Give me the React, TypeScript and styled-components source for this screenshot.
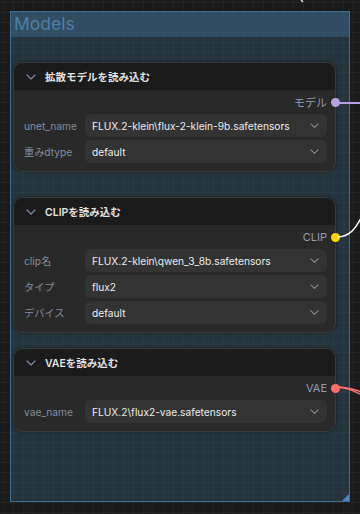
import React from "react";
import styled, { createGlobalStyle } from "styled-components";

const Global = createGlobalStyle`
  html, body { margin: 0; padding: 0; background: #1c1c1c; }
  body { width: 360px; height: 514px; overflow: hidden; font-family: Inter, "Noto Sans CJK JP", sans-serif; }
  * { box-sizing: border-box; }
`;

const Canvas = styled.div`
  position: relative;
  width: 360px;
  height: 514px;
  padding: 11px 10px 12px 10px;
  background-color: #1b1b1b;
  background-image:
    linear-gradient(to right, rgba(255,255,255,0.035) 1px, transparent 1px),
    linear-gradient(to bottom, rgba(255,255,255,0.035) 1px, transparent 1px);
  background-size: 10px 10px;
  background-position: 3px 2px;
`;

const Group = styled.div`
  position: relative;
  height: 491px;
  border: 1px solid #3f6d92;
  background: rgba(52, 84, 104, 0.45);
  display: flex;
  flex-direction: column;
`;

const GroupTitle = styled.div`
  height: 25px;
  background: rgba(58, 98, 130, 0.55);
  color: #4d80a8;
  font-family: Inter, sans-serif;
  font-size: 17.5px;
  line-height: 24px;
  padding-left: 3px;
`;

const GroupBody = styled.div`
  display: flex;
  flex-direction: column;
  padding: 0 13px 0 2px;
`;

const Resize = styled.div`
  position: absolute;
  right: 0;
  bottom: 0;
  width: 0;
  height: 0;
  border-left: 7px solid transparent;
  border-bottom: 7px solid #4a88c4;
`;

const Node = styled.div<{ $mt: number }>`
  position: relative;
  margin-top: ${(p) => p.$mt}px;
  border: 1px solid #3a3a3a;
  border-radius: 10px;
  background: #292929;
  box-shadow: 0 0 3px rgba(0,0,0,0.5);
`;

const Header = styled.div`
  height: 27px;
  display: flex;
  align-items: center;
  background: #1b1b1b;
  border-radius: 9px 9px 0 0;
  padding-left: 12px;
  gap: 9px;
  color: #e2e2e2;
  font-size: 10.5px;
  font-weight: 600;
`;

const Body = styled.div`
  display: flex;
  flex-direction: column;
  padding: 4px 8px 8px 10px;
  gap: 3px;
`;

const OutRow = styled.div`
  height: 16px;
  margin-bottom: 1px;
  display: flex;
  justify-content: flex-end;
  align-items: center;
  color: #929bb3;
  font-size: 11px;
`;

const Dot = styled.span<{ $c: string }>`
  position: absolute;
  right: -5px;
  width: 9px;
  height: 9px;
  border-radius: 50%;
  background: ${(p) => p.$c};
`;

const Row = styled.div`
  display: flex;
  align-items: center;
  height: 23px;
`;

const Label = styled.div`
  width: 61px;
  color: #858c9c;
  font-size: 10.2px;
  white-space: nowrap;
`;

const Combo = styled.div`
  flex: 1;
  height: 23px;
  border-radius: 6px;
  background: #333333;
  display: flex;
  align-items: center;
  justify-content: space-between;
  padding: 0 8px 0 7px;
  color: #ececec;
  font-size: 10.2px;
  white-space: nowrap;
`;

const Links = styled.svg`
  position: absolute;
  left: 0;
  top: 0;
  pointer-events: none;
`;

const Chev = ({ size = 10, color = "#8a8fa6" }: { size?: number; color?: string }) => (
  <svg width={size} height={size * 0.6} viewBox="0 0 10 6" fill="none">
    <path d="M1 1 L5 5 L9 1" stroke={color} strokeWidth="1.2" strokeLinecap="round" strokeLinejoin="round" />
  </svg>
);

type W = { label: string; value: string };

const LoaderNode = ({
  mt,
  title,
  out,
  color,
  widgets,
}: {
  mt: number;
  title: string;
  out: string;
  color: string;
  widgets: W[];
}) => (
  <Node $mt={mt}>
    <Header>
      <Chev size={10} color="#7f84a0" />
      <span>{title}</span>
    </Header>
    <Body>
      <OutRow>
        {out}
        <Dot $c={color} />
      </OutRow>
      {widgets.map((w) => (
        <Row key={w.label}>
          <Label>{w.label}</Label>
          <Combo>
            <span>{w.value}</span>
            <Chev size={9} color="#8d8d8d" />
          </Combo>
        </Row>
      ))}
    </Body>
  </Node>
);

export default function App() {
  return (
    <>
      <Global />
      <Canvas>
        <Group>
          <GroupTitle>Models</GroupTitle>
          <GroupBody>
            <LoaderNode
              mt={25}
              title="拡散モデルを読み込む"
              out="モデル"
              color="#b6a1e0"
              widgets={[
                { label: "unet_name", value: "FLUX.2-klein\\flux-2-klein-9b.safetensors" },
                { label: "重みdtype", value: "default" },
              ]}
            />
            <LoaderNode
              mt={25}
              title="CLIPを読み込む"
              out="CLIP"
              color="#ffd400"
              widgets={[
                { label: "clip名", value: "FLUX.2-klein\\qwen_3_8b.safetensors" },
                { label: "タイプ", value: "flux2" },
                { label: "デバイス", value: "default" },
              ]}
            />
            <LoaderNode
              mt={15}
              title="VAEを読み込む"
              out="VAE"
              color="#ff6e6e"
              widgets={[{ label: "vae_name", value: "FLUX.2\\flux2-vae.safetensors" }]}
            />
          </GroupBody>
          <Resize />
        </Group>
        <Links width="360" height="514" viewBox="0 0 360 514">
          <path d="M337 103 L360 103" stroke="#b6a1e0" strokeWidth="2" fill="none" />
          <path d="M337 237 C350 237 356 228 362 216" stroke="#ffffff" strokeWidth="1.6" fill="none" />
          <path d="M337 387 C348 387 352 389 362 392" stroke="#ff6e6e" strokeWidth="1.6" fill="none" />
          <path d="M337 387 C348 388 352 390 362 395" stroke="#ff6e6e" strokeWidth="1.4" fill="none" />
          <path d="M301 0 L303 2" stroke="#e0e0e0" strokeWidth="1.5" fill="none" />
        </Links>
      </Canvas>
    </>
  );
}
